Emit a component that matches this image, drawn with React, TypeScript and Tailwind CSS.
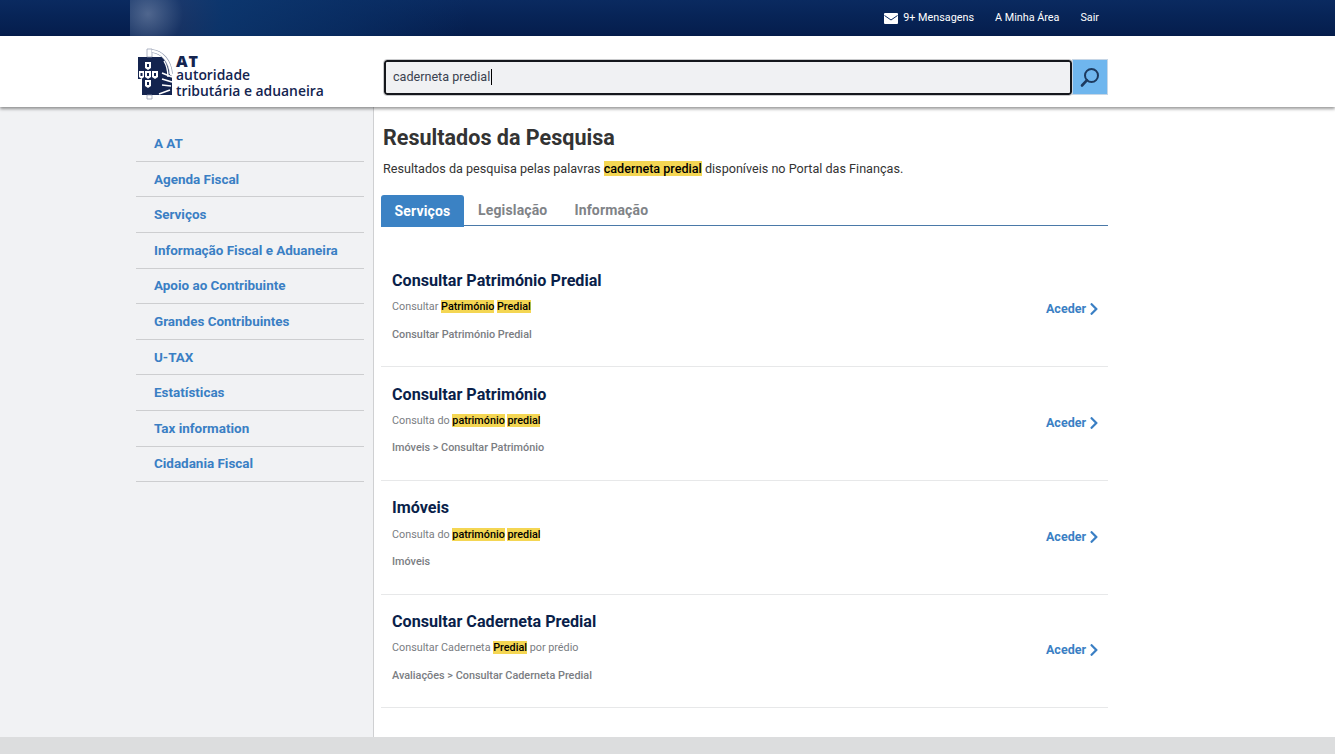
import { FaChevronRight } from 'react-icons/fa'
import type { ReactNode } from 'react'

const menu = [
  'A AT',
  'Agenda Fiscal',
  'Serviços',
  'Informação Fiscal e Aduaneira',
  'Apoio ao Contribuinte',
  'Grandes Contribuintes',
  'U-TAX',
  'Estatísticas',
  'Tax information',
  'Cidadania Fiscal',
]

function Hl({ children }: { children: ReactNode }) {
  return <span className="bg-[#f4d653] font-medium text-black">{children}</span>
}

const results: { title: string; desc: ReactNode; path: string }[] = [
  {
    title: 'Consultar Património Predial',
    desc: (
      <>
        Consultar <Hl>Património</Hl> <Hl>Predial</Hl>
      </>
    ),
    path: 'Consultar Património Predial',
  },
  {
    title: 'Consultar Património',
    desc: (
      <>
        Consulta do <Hl>património</Hl> <Hl>predial</Hl>
      </>
    ),
    path: 'Imóveis > Consultar Património',
  },
  {
    title: 'Imóveis',
    desc: (
      <>
        Consulta do <Hl>património</Hl> <Hl>predial</Hl>
      </>
    ),
    path: 'Imóveis',
  },
  {
    title: 'Consultar Caderneta Predial',
    desc: (
      <>
        Consultar Caderneta <Hl>Predial</Hl> por prédio
      </>
    ),
    path: 'Avaliações > Consultar Caderneta Predial',
  },
]

function Logo() {
  return (
    <div className="flex items-start">
      <svg width="36" height="52" viewBox="0 0 36 52">
        <path d="M1 9H26C30 14 33 21 33 27L35 28V47H5V31H1Z" fill="#14244f" />
        {/* staff of the sphere */}
        <path d="M10 1H15V9H10ZM10 47H15V51H10Z" fill="#ffffff" stroke="#8d97ad" strokeWidth="0.7" />
        {/* outer arc */}
        <path d="M15 3C25 4 33 13 34 26" fill="none" stroke="#8d97ad" strokeWidth="3.600" />
        <path d="M15 3C25 4 33 13 34 26" fill="none" stroke="#ffffff" strokeWidth="2.400" />
        {/* bands on the right */}
        <path d="M27 13C30 18 31 23 31 29" fill="none" stroke="#ffffff" strokeWidth="1.400" />
        <path d="M35 29L25 25M35 34L25 31M34 38L25 37M33 42L22 46" stroke="#ffffff" strokeWidth="1.500" />
        {/* shields */}
        <path d="M8 14h6v6l-3 2-3-2zM8 32h6v6l-3 2-3-2zM8 23h6v6l-3 2-3-2zM2 23h5v6l-2.500 2-2.500-2zM15 23h6v6l-3 2-3-2z" fill="#ffffff" />
        <path d="M10 16h2v3h-2zM10 34h2v3h-2zM10 25h2v3h-2zM3.500 25h2v3h-2zM17 25h2v3h-2z" fill="#14244f" />
      </svg>
      <div className="ml-[3px] mt-[7px] flex flex-col font-['Open_Sans',sans-serif] text-[#14244f]">
        <span className="text-[16px] font-extrabold leading-[12px] tracking-[1px]">AT</span>
        <span className="mt-[1px] text-[13.900px] font-semibold leading-[14px]">autoridade</span>
        <span className="mt-[1px] whitespace-nowrap text-[13.900px] font-semibold leading-[15px]">tributária e aduaneira</span>
      </div>
    </div>
  )
}

export default function App() {
  return (
    <div className="flex h-[754px] flex-col overflow-hidden bg-white font-['Roboto',sans-serif]">
      {/* Top bar */}
      <div className="flex h-9 shrink-0 bg-gradient-to-b from-[#0a2a60] to-[#051d4c] pl-[130px]">
        <div className="flex w-[978px] items-center justify-end bg-[radial-gradient(circle_at_18px_14px,rgba(110,130,165,0.7),rgba(40,70,120,0.5)_35px,rgba(13,58,114,0.75)_75px,rgba(10,50,105,0.6)_200px,rgba(10,42,96,0)_320px)] pr-[9px] text-[10.800px] text-white">
          <svg width="14" height="11" viewBox="0 0 14 11" className="mr-[5px]">
            <rect width="14" height="11" rx="1" fill="#ffffff" />
            <path d="M0.500 2.500L7 7L13.500 2.500" fill="none" stroke="#0a2a60" strokeWidth="1" />
          </svg>
          <span>9+ Mensagens</span>
          <span className="ml-[21px]">A Minha Área</span>
          <span className="ml-[21px]">Sair</span>
        </div>
      </div>

      {/* Header */}
      <header className="relative z-10 flex h-[71px] shrink-0 items-start bg-white pl-[137px] shadow-[0_2px_3px_rgba(0,0,0,0.4)]">
        <div className="mt-[12px] w-[247px]">
          <Logo />
        </div>
        <div className="mt-[23px] flex h-[36px] w-[724px] items-start">
          <div className="mt-px flex h-[35px] flex-1 items-center rounded-[3px] border-2 border-[#15171c] bg-[#f0f1f3] pb-[1px] pl-[7px] text-[12.600px] text-[#3a4250] outline outline-1 outline-[#c9cacc]">
            caderneta predial
            <span className="ml-px h-[16px] w-px bg-black" />
          </div>
          <div className="flex h-full w-[36px] items-center justify-center border border-[#c6d6e6] bg-[#6fb6ee]">
            <svg width="22" height="22" viewBox="0 0 22 22" fill="none" stroke="#1d3a5f" strokeWidth="2">
              <circle cx="12.500" cy="9.500" r="6.500" />
              <path d="M8 14.200L3 19.500" strokeWidth="2.600" strokeLinecap="round" />
            </svg>
          </div>
        </div>
      </header>

      {/* Body */}
      <div className="flex min-h-0 flex-1">
        <aside className="w-[374px] shrink-0 border-r border-[#cfd0d2] bg-[#f1f2f4] pl-[136px] pr-[9px] pt-[19.200px]">
          <nav className="flex flex-col">
            {menu.map((item) => (
              <a
                key={item}
                className="flex h-[35.600px] items-center border-b border-[#cdced0] pl-[18px] pt-[1.200px] text-[13.450px] font-bold text-[#3a7fc4]"
              >
                {item}
              </a>
            ))}
          </nav>
        </aside>

        <main className="w-[734px] shrink-0 pl-[7px]">
          <h1 className="ml-[2px] mt-[16px] text-[21.550px] font-bold leading-[30px] text-[#333333]">Resultados da Pesquisa</h1>
          <p className="ml-[2px] mt-[7px] text-[12.620px] leading-[18px] text-[#333333]">
            Resultados da pesquisa pelas palavras <Hl>caderneta predial</Hl> disponíveis no Portal das Finanças.
          </p>

          <div className="mt-[17px] flex h-[31px] items-stretch border-b border-[#4a79a8] text-[14px] font-bold tracking-[0.15px]">
            <div className="flex h-[32px] w-[83px] items-center justify-center rounded-t-[3px] bg-[#3b82c4] text-white">Serviços</div>
            <div className="flex items-center pl-[14px] text-[#808387]">Legislação</div>
            <div className="flex items-center pl-[27px] text-[#808387]">Informação</div>
          </div>

          <div className="mt-[27.500px]">
            {results.map((r) => (
              <div key={r.title} className="flex h-[113.700px] items-start justify-between border-b border-[#e7e8e9] pl-[11px] pr-[9px] pt-[16.400px]">
                <div>
                  <h2 className="text-[16.150px] font-bold leading-[22px] text-[#0a1f4a]">{r.title}</h2>
                  <p className="mt-[7.350px] text-[10.800px] leading-[15px] text-[#7a7d82]">{r.desc}</p>
                  <p className="mt-[12.450px] text-[10.850px] font-medium leading-[15px] text-[#7a7d82]">{r.path}</p>
                </div>
                <a className="mt-[30.350px] flex items-center text-[12.500px] font-bold leading-[18px] text-[#3a7fc4]">
                  Aceder
                  <FaChevronRight size={14} className="-mr-[2px] ml-px" />
                </a>
              </div>
            ))}
          </div>
        </main>
      </div>

      {/* Footer */}
      <div className="h-[17px] shrink-0 bg-[#dcddde]" />
    </div>
  )
}
